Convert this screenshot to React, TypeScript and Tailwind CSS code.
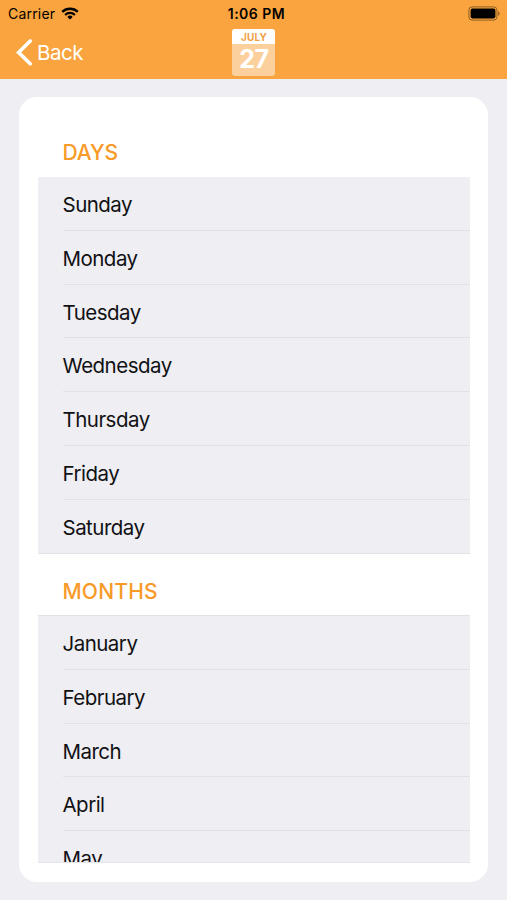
import React from "react";

type SectionProps = { title: string; items: string[]; headerClass: string; listClass: string };

const days = ["Sunday", "Monday", "Tuesday", "Wednesday", "Thursday", "Friday", "Saturday"];
const months = ["January", "February", "March", "April", "May"];

function StatusBar() {
  return (
    <div className="grid h-[27px] grid-cols-3 items-center pl-2 pr-[6px] text-black">
      <div className="flex items-center gap-[6px]">
        <span className="text-[14px] leading-[27px] tracking-[0.2px]">Carrier</span>
        <svg width="18" height="13" viewBox="0 0 18 13" className="block" aria-hidden="true">
          <path d="M1.2 4.9 A11.2 11.2 0 0 1 16.8 4.9" fill="none" stroke="#000" strokeWidth="2.3" />
          <path d="M4.1 7.9 A7 7 0 0 1 13.9 7.9" fill="none" stroke="#000" strokeWidth="2.1" />
          <path d="M9 12.6 L6.3 9.9 A3.8 3.8 0 0 1 11.7 9.9 Z" fill="#000" />
        </svg>
      </div>
      <span className="pl-[4px] text-center text-[14px] font-semibold leading-[27px] tracking-[0.5px]">1:06 PM</span>
      <svg width="33" height="15" viewBox="0 0 33 15" className="justify-self-end" aria-hidden="true">
        <rect x="0.9" y="0.9" width="28" height="13.2" rx="3.2" fill="none" stroke="#000" strokeOpacity="0.42" />
        <rect x="2.6" y="2.6" width="24.8" height="9.8" rx="1.8" fill="#000" />
        <path d="M30.2 5.2 C32 5.9 32 9.1 30.2 9.8 Z" fill="#000" fillOpacity="0.45" />
      </svg>
    </div>
  );
}

function NavBar() {
  return (
    <div className="grid h-[52px] grid-cols-3 pl-4 pr-[15px]">
      <button className="flex h-[50px] items-center gap-1 text-white">
        <svg width="17" height="27" viewBox="0 0 17 27" className="block" aria-hidden="true">
          <path d="M14.2 2 L2.6 13.4 L14.2 24.8" fill="none" stroke="#fff" strokeWidth="3.6" strokeLinecap="round" />
        </svg>
        <span className="pt-px text-[20.5px] leading-[50px] tracking-[-0.5px]">Back</span>
      </button>
      <div className="mt-[2px] flex h-[47px] w-[43px] flex-col justify-self-center overflow-hidden rounded-[3px] bg-[#fcd09c] text-center">
        <div className="h-[15px] bg-white text-[10px] font-bold leading-[16px] tracking-[0.2px] text-[#f0a044]">JULY</div>
        <div className="text-[25px] font-bold leading-[30px] tracking-[-0.5px] text-white">27</div>
      </div>
    </div>
  );
}

function Section({ title, items, headerClass, listClass }: SectionProps) {
  return (
    <section>
      <h2 className={`pl-[24.5px] text-[21px] font-medium text-[#f79a28] ${headerClass}`}>{title}</h2>
      <ul className={`border-[#e2e2e6] bg-[#eeeef3] ${listClass}`}>
        {items.map((item) => (
          <li key={item} className="group pl-[24.5px]">
            <div className="h-[53.72px] border-b border-[#e2e2e6] text-[20.5px] leading-[56px] tracking-[-0.52px] text-[#111113] group-last:border-b-0">
              {item}
            </div>
          </li>
        ))}
      </ul>
    </section>
  );
}

export default function App() {
  return (
    <div className="flex h-[900px] w-full flex-col bg-[#eeeef3] font-['Inter','Liberation_Sans',sans-serif]">
      <header className="h-[79px] bg-[#f9a43e]">
        <StatusBar />
        <NavBar />
      </header>
      <main className="mx-[19px] mt-[18px] h-[785px] rounded-[18px] bg-white pl-[19px] pr-[18px] pt-[18px]">
        <div className="h-[748px] overflow-hidden border-b border-[#e6e6ea]">
          <Section
            title="Days"
            items={days}
            headerClass="h-[62.3px] pt-[15px] leading-[46px] uppercase tracking-[-0.1px]"
            listClass="border-b"
          />
          <Section
            title="Months"
            items={months}
            headerClass="h-[60.8px] pt-[14.5px] leading-[46px] uppercase tracking-[0.2px]"
            listClass="border-t"
          />
        </div>
      </main>
    </div>
  );
}
